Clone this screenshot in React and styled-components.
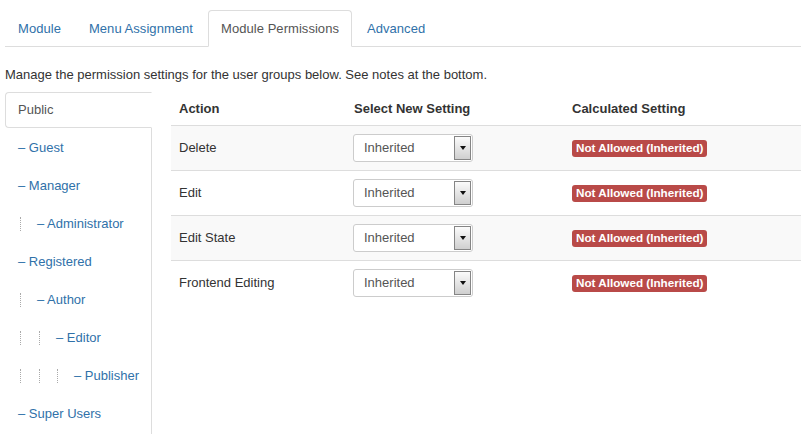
import React from 'react';
import styled, { createGlobalStyle } from 'styled-components';

const GlobalStyle = createGlobalStyle`
  html, body {
    margin: 0;
    padding: 0;
    background: #fff;
  }
  body {
    font-family: 'Liberation Sans', Arial, sans-serif;
    font-size: 13px;
    line-height: 18px;
    color: #333;
  }
`;

const Page = styled.div`
  width: 796px;
  padding: 10px 3px 0 5px;
  height: 424px;
  overflow: hidden;
`;

const Tabs = styled.ul`
  display: flex;
  list-style: none;
  margin: 0;
  padding: 0;
  border-bottom: 1px solid #ddd;
`;

const Tab = styled.li`
  margin-right: 2px;
  margin-bottom: -1px;
  padding: 8px 12px;
  line-height: 19px;
  border: 1px solid transparent;
  border-radius: 4px 4px 0 0;
  color: #3071a9;
  letter-spacing: 0.05px;
  cursor: pointer;

  ${(p) =>
    p.$active &&
    `
    color: #555;
    background: #fff;
    border-color: #ddd #ddd transparent;
  `}
`;

const Intro = styled.p`
  margin: 19px 0 8px;
`;

const Body = styled.div`
  display: flex;
  align-items: flex-start;
`;

const GroupNav = styled.ul`
  list-style: none;
  margin: 0 19px 0 0;
  padding: 0;
  width: 146px;
  border-right: 1px solid #ddd;
  flex-shrink: 0;
`;

const Group = styled.li`
  margin-right: -1px;
  margin-bottom: 2px;
  padding: 8px 12px;
  line-height: 18px;
  border: 1px solid transparent;
  border-radius: 4px 0 0 4px;
  color: #3071a9;
  white-space: nowrap;
  display: flex;
  align-items: center;

  ${(p) =>
    p.$active &&
    `
    color: #555;
    background: #fff;
    border-color: #ddd transparent #ddd #ddd;
  `}
`;

const Level = styled.span`
  display: inline-block;
  width: 16px;
  height: 14px;
  margin-left: 2px;
  border-left: 1px dotted #aaa;
`;

const Table = styled.table`
  flex: 1;
  border-collapse: collapse;
  border-spacing: 0;
`;

const Th = styled.th`
  text-align: left;
  font-weight: bold;
  padding: 8px 8px 7px;
  line-height: 18px;
  vertical-align: bottom;
  width: ${(p) => p.$w || 'auto'};
`;

const Row = styled.tr`
  background: ${(p) => (p.$striped ? '#f9f9f9' : 'transparent')};
`;

const Td = styled.td`
  padding: 8px;
  line-height: 18px;
  border-top: 1px solid #ddd;
  vertical-align: middle;
`;

const Select = styled.div`
  display: flex;
  align-items: center;
  box-sizing: border-box;
  width: 120px;
  height: 28px;
  margin-left: -1px;
  padding: 1px 1px 1px 10px;
  border: 1px solid #ccc;
  border-radius: 3px;
  background: #fff;
  color: #555;
`;

const SelectValue = styled.span`
  flex: 1;
`;

const SelectButton = styled.span`
  display: flex;
  align-items: center;
  justify-content: center;
  box-sizing: border-box;
  width: 17px;
  height: 100%;
  border: 1px solid #858585;
  background: linear-gradient(#fbfbfb, #cfcfcf);

  &::after {
    content: '';
    border-top: 4px solid #111;
    border-left: 3.5px solid transparent;
    border-right: 3.5px solid transparent;
  }
`;

const Badge = styled.span`
  display: inline-block;
  padding: 1px 4px 2px;
  font-size: 11.7px;
  font-weight: bold;
  line-height: 14px;
  color: #fff;
  background: #b94a48;
  border-radius: 3px;
  white-space: nowrap;
`;

const tabs = ['Module', 'Menu Assignment', 'Module Permissions', 'Advanced'];

const groups = [
  { name: 'Public', level: 0 },
  { name: 'Guest', level: 1 },
  { name: 'Manager', level: 1 },
  { name: 'Administrator', level: 2 },
  { name: 'Registered', level: 1 },
  { name: 'Author', level: 2 },
  { name: 'Editor', level: 3 },
  { name: 'Publisher', level: 4 },
  { name: 'Super Users', level: 1 },
];

const actions = ['Delete', 'Edit', 'Edit State', 'Frontend Editing'];

export default function App() {
  return (
    <>
      <GlobalStyle />
      <Page>
        <Tabs>
          {tabs.map((t) => (
            <Tab key={t} $active={t === 'Module Permissions'}>
              {t}
            </Tab>
          ))}
        </Tabs>

        <Intro>Manage the permission settings for the user groups below. See notes at the bottom.</Intro>

        <Body>
          <GroupNav>
            {groups.map((g) => (
              <Group key={g.name} $active={g.level === 0}>
                {Array.from({ length: Math.max(g.level - 1, 0) }).map((_, i) => (
                  <Level key={i} />
                ))}
                {g.level > 0 ? `– ${g.name}` : g.name}
              </Group>
            ))}
          </GroupNav>

          <Table>
            <thead>
              <tr>
                <Th $w="159px">Action</Th>
                <Th $w="202px">Select New Setting</Th>
                <Th>Calculated Setting</Th>
              </tr>
            </thead>
            <tbody>
              {actions.map((a, i) => (
                <Row key={a} $striped={i % 2 === 0}>
                  <Td>{a}</Td>
                  <Td>
                    <Select>
                      <SelectValue>Inherited</SelectValue>
                      <SelectButton />
                    </Select>
                  </Td>
                  <Td>
                    <Badge>Not Allowed (Inherited)</Badge>
                  </Td>
                </Row>
              ))}
            </tbody>
          </Table>
        </Body>
      </Page>
    </>
  );
}
